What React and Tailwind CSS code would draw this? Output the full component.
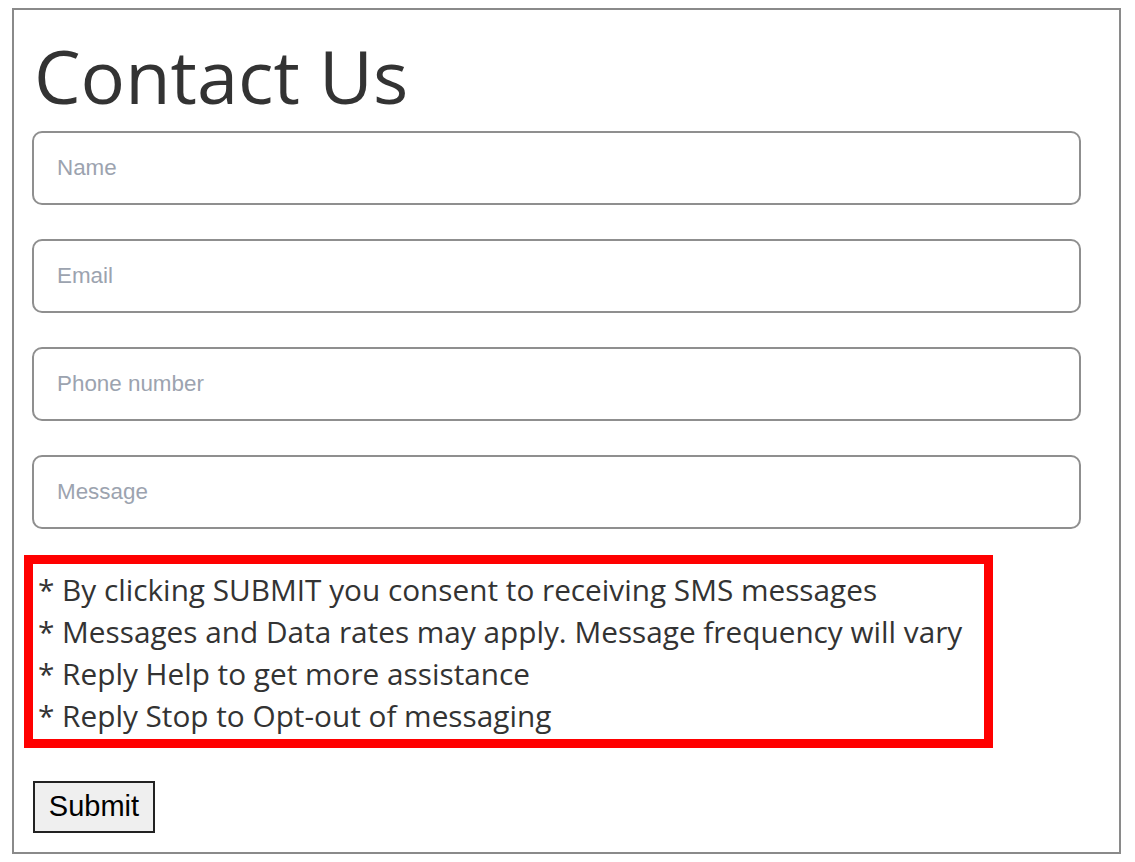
import { useState } from "react";

const fields = [
  { name: "name", placeholder: "Name", type: "text" },
  { name: "email", placeholder: "Email", type: "email" },
  { name: "phone", placeholder: "Phone number", type: "tel" },
  { name: "message", placeholder: "Message", type: "text" },
];

const notes = [
  "* By clicking SUBMIT you consent to receiving SMS messages",
  "* Messages and Data rates may apply. Message frequency will vary",
  "* Reply Help to get more assistance",
  "* Reply Stop to Opt-out of messaging",
];

export default function App() {
  const [values, setValues] = useState({});

  return (
    <div className="bg-white min-h-[862px] pt-[8px] pl-[12px]">
      <div className="w-[1109px] h-[846px] border-2 border-[#8a8a8a] pl-[18px] pr-[36px]">
        <h1 className="font-['Open_Sans',sans-serif] text-[74px] leading-[1] text-[#333] pt-[29px] pl-[2px] h-[121px]">
          Contact Us
        </h1>

        {/* Form fields */}
        <div className="flex flex-col gap-[34px]">
          {fields.map(f => (
            <input
              key={f.name}
              type={f.type}
              placeholder={f.placeholder}
              value={values[f.name] || ""}
              onChange={e => setValues(v => ({ ...v, [f.name]: e.target.value }))}
              className="w-[1049px] h-[74px] rounded-[10px] border-2 border-[#8f8f8f] px-[23px] font-['Liberation_Sans',Arial,sans-serif] text-[22.4px] text-[#333] placeholder:text-[#9ca3af] outline-none"
            />
          ))}
        </div>

        <div className="mt-[26px] -ml-[8px] w-[969px] h-[193px] border-[9px] border-[#ff0000] pl-[5px] pt-[5px] font-['Open_Sans',sans-serif] text-[29.75px] leading-[42px] text-[#333]">
          {notes.map(n => (
            <div key={n}>{n}</div>
          ))}
        </div>

        <button className="mt-[33px] ml-[1px] w-[122px] h-[52px] border-2 border-[#222] bg-[#efefef] font-['Liberation_Sans',Arial,sans-serif] text-[29px] text-black">
          Submit
        </button>
      </div>
    </div>
  );
}
